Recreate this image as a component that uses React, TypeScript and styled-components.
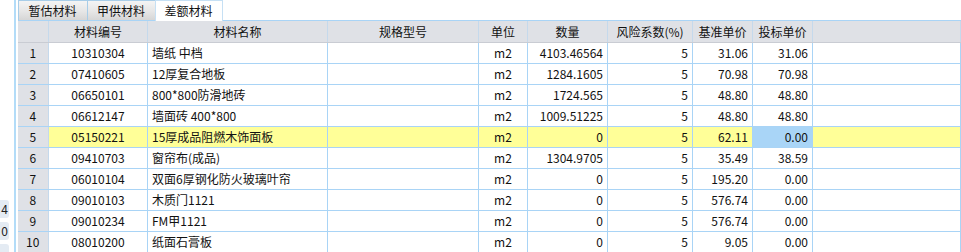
import React from "react";
import styled, { createGlobalStyle } from "styled-components";

interface Row {
  code: string;
  name: string;
  spec: string;
  unit: string;
  qty: string;
  risk: string;
  base: string;
  bid: string;
}

const rows: Row[] = [
  { code: "10310304", name: "墙纸 中档", spec: "", unit: "m2", qty: "4103.46564", risk: "5", base: "31.06", bid: "31.06" },
  { code: "07410605", name: "12厚复合地板", spec: "", unit: "m2", qty: "1284.1605", risk: "5", base: "70.98", bid: "70.98" },
  { code: "06650101", name: "800*800防滑地砖", spec: "", unit: "m2", qty: "1724.565", risk: "5", base: "48.80", bid: "48.80" },
  { code: "06612147", name: "墙面砖 400*800", spec: "", unit: "m2", qty: "1009.51225", risk: "5", base: "48.80", bid: "48.80" },
  { code: "05150221", name: "15厚成品阻燃木饰面板", spec: "", unit: "m2", qty: "0", risk: "5", base: "62.11", bid: "0.00" },
  { code: "09410703", name: "窗帘布(成品)", spec: "", unit: "m2", qty: "1304.9705", risk: "5", base: "35.49", bid: "38.59" },
  { code: "06010104", name: "双面6厚钢化防火玻璃叶帘", spec: "", unit: "m2", qty: "0", risk: "5", base: "195.20", bid: "0.00" },
  { code: "09010103", name: "木质门1121", spec: "", unit: "m2", qty: "0", risk: "5", base: "576.74", bid: "0.00" },
  { code: "09010234", name: "FM甲1121", spec: "", unit: "m2", qty: "0", risk: "5", base: "576.74", bid: "0.00" },
  { code: "08010200", name: "纸面石膏板", spec: "", unit: "m2", qty: "0", risk: "5", base: "9.05", bid: "0.00" },
];

const SELECTED = 4;
const LINE = "#a9d4f6";
const HEAD_BG = "#dfe1e6";

const GlobalStyle = createGlobalStyle`
  body {
    margin: 0;
    background: #fff;
    font-family: "Noto Sans CJK SC", "Noto Sans", sans-serif;
    font-size: 12px;
    color: #111;
    overflow: hidden;
  }
`;

const Page = styled.div`
  display: flex;
  width: 961px;
  height: 252px;
  overflow: hidden;
`;

const SideStrip = styled.div`
  width: 14px;
  border-right: 2px solid #b3dcf8;
  display: flex;
  flex-direction: column;
  gap: 4px;
  padding-top: 200px;
  overflow: hidden;
`;

const SideButton = styled.div`
  flex: none;
  width: 22px;
  height: 18px;
  margin-left: -13px;
  border-radius: 3px;
  background: #e4ebf3;
  text-align: right;
  padding-right: 1px;
  box-sizing: border-box;
  line-height: 18px;
  font-size: 12px;
  color: #222;
`;

const Main = styled.div`
  flex: 1;
  margin-left: 2px;
  display: flex;
  flex-direction: column;
`;

const TabBar = styled.div`
  display: flex;
  height: 21px;
  border-bottom: 1px solid ${LINE};
  box-sizing: border-box;
`;

const Tab = styled.div<{ active?: boolean; w: number }>`
  width: ${(p) => p.w}px;
  height: 21px;
  box-sizing: border-box;
  border: 1px solid ${(p) => (p.active ? "#c6e0f4" : "#a8cde8")};
  border-bottom: ${(p) => (p.active ? "none" : `1px solid ${LINE}`)};
  margin-left: -1px;
  &:first-child {
    margin-left: 0;
  }
  background: ${(p) =>
    p.active ? "#fff" : "linear-gradient(#f4f4f4, #e6e6e6 55%, #d6d6d6)"};
  text-align: center;
  line-height: 19px;
  font-size: 12px;
  color: #111;
`;

const Table = styled.table`
  border-collapse: collapse;
  table-layout: fixed;
  width: 943px;
`;

const HeadCell = styled.th`
  height: 21px;
  padding: 0;
  background: ${HEAD_BG};
  font-weight: normal;
  text-align: center;
  border-right: 1px solid #c5d9ec;
  border-bottom: 1px solid #c9ccd3;
  white-space: nowrap;
  overflow: hidden;
`;

const Cell = styled.td<{ align?: "left" | "center" | "right"; bg?: string }>`
  height: 20px;
  padding: 0 4px;
  text-align: ${(p) => p.align || "left"};
  background: ${(p) => p.bg || "transparent"};
  border-right: 1px solid ${LINE};
  border-bottom: 1px solid ${LINE};
  white-space: nowrap;
  overflow: hidden;
  line-height: 20px;
`;

const NumCell = styled(Cell)`
  background: ${HEAD_BG};
  border-right-color: #c5d9ec;
`;

const widths = [31, 99, 180, 151, 49, 80, 85, 60, 60, 148];

const App: React.FC = () => {
  return (
    <>
      <GlobalStyle />
      <Page>
        <SideStrip>
          <SideButton>4</SideButton>
          <SideButton>0</SideButton>
          <SideButton />
        </SideStrip>
        <Main>
          <TabBar>
            <Tab w={70}>暂估材料</Tab>
            <Tab w={69}>甲供材料</Tab>
            <Tab w={68} active>差额材料</Tab>
          </TabBar>
          <Table>
            <colgroup>
              {widths.map((w, i) => (
                <col key={i} style={{ width: w }} />
              ))}
            </colgroup>
            <thead>
              <tr>
                <HeadCell />
                <HeadCell>材料编号</HeadCell>
                <HeadCell>材料名称</HeadCell>
                <HeadCell>规格型号</HeadCell>
                <HeadCell>单位</HeadCell>
                <HeadCell>数量</HeadCell>
                <HeadCell>风险系数(%)</HeadCell>
                <HeadCell>基准单价</HeadCell>
                <HeadCell>投标单价</HeadCell>
                <HeadCell />
              </tr>
            </thead>
            <tbody>
              {rows.map((r, i) => {
                const bg = i === SELECTED ? "#ffff98" : undefined;
                return (
                  <tr key={r.code}>
                    <NumCell align="center">{i + 1}</NumCell>
                    <Cell align="center" bg={bg}>{r.code}</Cell>
                    <Cell bg={bg}>{r.name}</Cell>
                    <Cell bg={bg}>{r.spec}</Cell>
                    <Cell align="center" bg={bg}>{r.unit}</Cell>
                    <Cell align="right" bg={bg}>{r.qty}</Cell>
                    <Cell align="right" bg={bg}>{r.risk}</Cell>
                    <Cell align="right" bg={bg}>{r.base}</Cell>
                    <Cell align="right" bg={i === SELECTED ? "#a9d5f7" : undefined}>
                      {r.bid}
                    </Cell>
                    <Cell bg={bg} />
                  </tr>
                );
              })}
            </tbody>
          </Table>
        </Main>
      </Page>
    </>
  );
};

export default App;
